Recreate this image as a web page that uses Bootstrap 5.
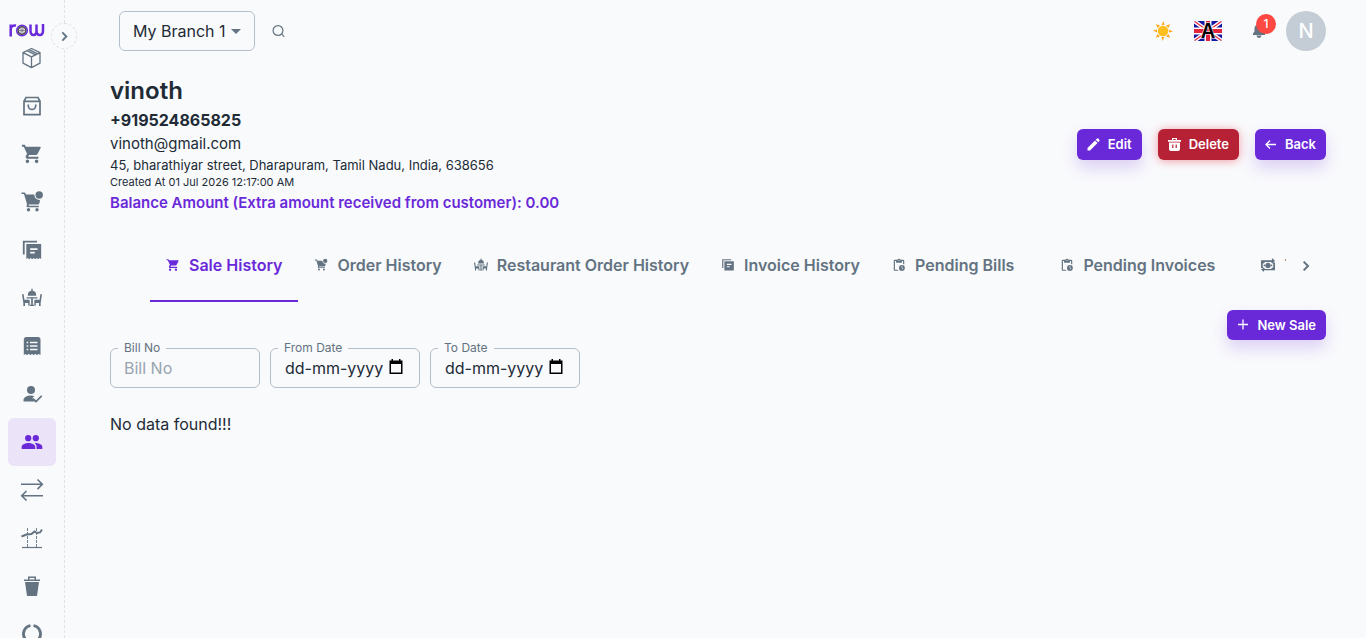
<!DOCTYPE html>
<html lang="en">
<head>
<meta charset="utf-8">
<meta name="viewport" content="width=device-width, initial-scale=1">
<title>Customer - vinoth</title>
<link rel="stylesheet" href="https://cdn.jsdelivr.net/npm/bootstrap@5.3.0/dist/css/bootstrap.min.css">
<style>
:root{--ink:#212b36;--muted:#637381;--brand:#6929d9;--page:#f9fafc;--line:#b4bfcb}
body{font-family:Inter,sans-serif;font-size:16px;line-height:24px;color:var(--ink);background:var(--page)}
a{text-decoration:none}
svg{display:block;flex:none}
svg:not([fill]){fill:currentColor}
.side{width:65px;height:100vh;border-right:1px dashed #dfe3e8}
.side-scroll{height:100%;overflow:hidden}
.logo{height:34px;padding:22px 0 0 9px}
.side-item{width:48px;height:48px;margin-left:8px;color:var(--muted);border-radius:6px}
.side-item.active{background:#ebe3f7;color:var(--brand)}
.side-toggle{top:23px;right:-13px;width:26px;height:26px;border:1px dashed #dfe3e8;background:var(--page);color:var(--muted)}
.topbar{height:62px;padding:0 40px 0 54px}
.branch{width:136px;height:40px;padding:0 24px 0 13px;border:1px solid var(--line);border-radius:6px;background:transparent;color:var(--ink);appearance:none}
.branch-caret{right:7px;top:8px;color:var(--muted);pointer-events:none}
.plain{border:0;padding:0;background:transparent;color:var(--muted)}
.lang{margin-left:21px}
.bell{margin:0 20px 0 30px}
.bell-count{left:4px;top:-10px;width:20px;height:20px;background:#ff4842;color:#fff;font-size:12px;font-weight:500;line-height:20px}
.avatar{width:40px;height:40px;background:#c4cdd5;color:#fff;font-size:20px;font-weight:500}
.page{padding:12px 40px 24px 45px}
.name{font-size:24px;line-height:34px;font-weight:600}
.phone{font-size:16px;font-weight:700}
.mail{font-size:15px}
.addr{font-size:13px;line-height:18px}
.made{font-size:11px;line-height:17px}
.balance{font-size:15px;font-weight:600;color:var(--brand)}
.act{--bs-btn-color:#fff;--bs-btn-hover-color:#fff;--bs-btn-bg:var(--brand);--bs-btn-hover-bg:#5a1fc2;--bs-btn-border-width:0px;height:31px;padding:0 10px 1px;border-radius:6px;font-size:13px;font-weight:600;line-height:24px;box-shadow:0 8px 16px rgba(105,41,217,.2)}
.act-danger{--bs-btn-bg:#b72136;--bs-btn-hover-bg:#98182b;box-shadow:0 1px 10px rgba(229,40,60,.45)}
.act-new{height:30px}
.tabs{height:72px;margin-top:15px;padding:0 40px}
.tab{gap:9px;padding:0 16px;height:72px;border:0;border-bottom:2px solid transparent;background:transparent;color:var(--muted);font-weight:600;white-space:nowrap}
.tab.active{color:var(--brand);border-color:var(--brand)}
.tab-late{margin-right:14px}
.tab-next{right:0;top:0;width:40px;height:72px}
.field{width:150px}
.field label{left:8px;top:-8px;padding:0 6px;font-size:12px;line-height:16px;color:var(--muted);background:var(--page)}
.field input{width:100%;height:40px;padding:0 13px;border:1px solid var(--line);border-radius:6px;background:transparent;color:var(--ink)}
.field input::placeholder{color:#98a4b0;opacity:1}
.field .date{padding-left:14px}
.field .date::placeholder{color:var(--ink)}
.field-pick{right:16px;top:11px;color:#000}
</style>
</head>
<body>
<svg class="d-none" aria-hidden="true">
  <symbol id="cart" viewBox="0 0 24 24"><path d="M17 18a2 2 0 1 1 0 4 2 2 0 0 1 0-4M1 2h3.300l.9 2H20.500a1 1 0 0 1 .9 1.500L18 12a2 2 0 0 1-1.700 1H8.800L7.900 14.700a.3.3 0 0 0 .3.4H19v2H7a2 2 0 0 1-1.700-3L6.600 11.600 3 4H1zM7 18a2 2 0 1 1 0 4 2 2 0 0 1 0-4"/></symbol>
  <symbol id="order" viewBox="0 0 24 24"><circle cx="19.200" cy="5" r="3.700"/><path d="M1.500 2.500h2.700a1.500 1.500 0 0 1 1.400 1L6 4.600h8.300a5.200 5.200 0 0 0 5.700 5.400l-.5 3a2 2 0 0 1-1.900 1.600H8.500l.3 1.200h10v1.500H8a1.500 1.500 0 0 1-1.400-1.900l.4-1.400L4 4.100H1.500z"/><circle cx="8.500" cy="19.700" r="1.700"/><circle cx="17" cy="19.700" r="1.700"/></symbol>
  <symbol id="invoice" viewBox="0 0 24 24"><path d="M2 2h15.500v1.800H4V17H2zM5.800 5.500H22v16.300l-1.700-1-1.700 1.200-1.600-1.200-1.600 1.200-1.600-1.200-1.600 1.200-1.600-1.200-1.600 1.200-1.600-1.200-1.600 1zM10 10v1.900h8V10zm0 4v1.900h5V14z" fill-rule="evenodd"/></symbol>
  <symbol id="dining" viewBox="0 0 24 24"><path d="M11.200 1h1.600v2.200A5 5 0 0 1 17 8v1.400H7V8a5 5 0 0 1 4.200-4.800zM5.500 11h13v1.700h-5.500V20h1.600v1.500H9.400V20H11v-7.300H5.500zM0 7.500h2l.9 6.500h5.300a1 1 0 0 1 1 1v6H7.400v-3H3.600v3.500H1.600V18zM24 7.500h-2l-.9 6.500h-5.300a1 1 0 0 0-1 1v6h1.800v-3h3.800v3.500h2V18z"/></symbol>
  <symbol id="clip" viewBox="0 0 24 24"><path d="M17 12a5 5 0 1 0 0 10 5 5 0 0 0 0-10m1.700 7.300L16.500 17v-3.200h1V16.600l1.900 1.900zM18 3h-3.200a3 3 0 0 0-5.600 0H5a2 2 0 0 0-2 2v15c0 1.100.9 2 2 2h6.100a7 7 0 0 1-1.400-2H5V5h2v3h10V5h2v5.300c.7.200 1.400.5 2 .9V5a2 2 0 0 0-2-2zm-6 2a1 1 0 1 1 0-2 1 1 0 0 1 0 2"/></symbol>
  <symbol id="chev" viewBox="0 0 24 24"><path d="M8.500 5.500 15 12l-6.500 6.500" fill="none" stroke="currentColor" stroke-width="3"/></symbol>
  <symbol id="cal" viewBox="0 0 16 16"><path d="M3.500 0v1.500H1.500V15h13V1.500h-2V0H11v1.500H5V0zM3 5h10v8.500H3z" fill-rule="evenodd"/></symbol>
</svg>

<div class="d-flex">
  <aside class="side position-sticky top-0 flex-shrink-0">
    <nav class="side-scroll" aria-label="Main">
      <a href="#" class="logo d-block" aria-label="row">
        <svg width="37" height="17" viewBox="0 0 37 17" fill="none" stroke="#6b2bdc" stroke-width="2.500"><path d="M1.700 2.500v12M1.700 8c0-3.500 2-5 5.300-4.500"/><path d="M21.500 2.500v6c0 6 6 6 6 0v-6m0 6c0 6 6.500 6 6.500 0V2"/><circle cx="13" cy="8.500" r="5.300" stroke-width="1.500"/><circle cx="13" cy="8.500" r="3.800" stroke="#4b4453" stroke-width="1.600"/><path d="M13 4.500v8M9 8.500h8M10.200 5.700l5.600 5.600M15.800 5.700l-5.600 5.600" stroke="#77717c" stroke-width=".8"/></svg>
      </a>
      <a href="#" class="side-item d-flex align-items-center justify-content-center" aria-label="Products"><svg width="24" height="24" viewBox="0 0 24 24" fill="none" stroke="currentColor" stroke-width="1.300" stroke-linejoin="round"><path d="M11.500 2.500 20 6.600v10.600l-8.500 4.400L3 17.200V6.600zM3 6.600l8.500 4.200L20 6.600M11.500 10.800v10.800M7 4.700l8.500 4.200M9 3.700l8.500 4.100"/></svg></a>
      <a href="#" class="side-item d-flex align-items-center justify-content-center" aria-label="Purchases"><svg width="24" height="24" viewBox="0 0 24 24" fill="none" stroke="currentColor" stroke-width="1.700"><path d="M4 7.300h16v13.400H4zM4 7.300 6 3.500h12l2 3.800M8.300 10.500v1.300a3.700 3.700 0 0 0 7.400 0v-1.300"/></svg></a>
      <a href="#" class="side-item d-flex align-items-center justify-content-center" aria-label="Sales"><svg width="22" height="22"><use href="#cart"/></svg></a>
      <a href="#" class="side-item d-flex align-items-center justify-content-center" aria-label="Orders"><svg width="24" height="24"><use href="#order"/></svg></a>
      <a href="#" class="side-item d-flex align-items-center justify-content-center" aria-label="Invoices"><svg width="22" height="22"><use href="#invoice"/></svg></a>
      <a href="#" class="side-item d-flex align-items-center justify-content-center" aria-label="Restaurant"><svg width="20" height="20"><use href="#dining"/></svg></a>
      <a href="#" class="side-item d-flex align-items-center justify-content-center" aria-label="Receipts"><svg width="24" height="24" viewBox="0 0 24 24"><path fill-rule="evenodd" d="M6 3h12a2.500 2.500 0 0 1 2.500 2.500V21l-1.700-.9-1.700 1-1.700-1-1.700 1-1.700-1-1.700 1-1.700-1-1.700 1-1.700-1-1.400.9V5.500A2.500 2.500 0 0 1 6 3m.7 4.700v1.500h1.500V7.700zm3.300 0v1.500h7.500V7.700zm-3.300 3.500v1.500h1.500v-1.500zm3.300 0v1.500h7.500v-1.500zm-3.300 3.500v1.500h1.500v-1.500zm3.300 0v1.500h7.500v-1.500z"/></svg></a>
      <a href="#" class="side-item d-flex align-items-center justify-content-center" aria-label="Attendance"><svg width="24" height="24" viewBox="0 0 24 24"><circle cx="11" cy="8" r="4"/><path d="M11 13.500c1.200 0 2.300.2 3.300.5l-2 2.200 3.200 3.200H3.500V18c0-2.700 3.500-4.500 7.500-4.500"/><path d="m13 16.500 3 3 5.700-5.700" fill="none" stroke="currentColor" stroke-width="1.700"/></svg></a>
      <a href="#" class="side-item active d-flex align-items-center justify-content-center" aria-label="Customers" aria-current="page"><svg width="24" height="24" viewBox="0 0 24 24"><circle cx="8.200" cy="8.200" r="3.100"/><circle cx="15.800" cy="8.200" r="3.100"/><path d="M8.500 13c-2.300 0-6.800 1.200-6.800 3.500V19h13.500v-2.500C15.200 14.200 10.800 13 8.500 13m7 0-1 .1c1.200.8 2 2 2 3.400V19h5.800v-2.500c0-2.300-4.500-3.500-6.800-3.500"/></svg></a>
      <a href="#" class="side-item d-flex align-items-center justify-content-center" aria-label="Transfers"><svg width="24" height="24" viewBox="0 0 24 24" fill="none" stroke="currentColor" stroke-width="1.600"><path d="M1 6.300h21M17.500 1.500l4.800 4.800-4.800 4.800M23 17.700H2M6.500 13l-4.800 4.700 4.800 4.800"/></svg></a>
      <a href="#" class="side-item d-flex align-items-center justify-content-center" aria-label="Reports"><svg width="24" height="24" viewBox="0 0 24 24" fill="none" stroke="currentColor"><path d="M2 21.500h20" stroke-width="1.200"/><path d="M7.500 2v19M16.500 2v19" stroke-width=".9" stroke-dasharray="3 1"/><path d="m1.500 10.500 5-2 5-.5 3-2.500 2.500 1.500 3-.5 2-3" stroke-width="1.900"/></svg></a>
      <a href="#" class="side-item d-flex align-items-center justify-content-center" aria-label="Trash"><svg width="24" height="24" viewBox="0 0 24 24"><path fill-rule="evenodd" d="M8 2.500h8v3h4V7H4V5.500h4zm1.500 1.500v1.500h5V4zM5 8h14l-2 14H7z"/></svg></a>
      <a href="#" class="side-item d-flex align-items-center justify-content-center" aria-label="Settings"><svg width="24" height="24" viewBox="0 0 24 24" fill="none" stroke="currentColor" stroke-width="2.800"><path d="M10.500 3.700A8.300 8.300 0 0 0 6.200 18M13.500 3.700A8.300 8.300 0 0 1 17.800 18"/></svg></a>
    </nav>
    <button type="button" class="side-toggle position-absolute rounded-circle d-flex align-items-center justify-content-center p-0" aria-label="Expand menu"><svg width="15" height="15"><use href="#chev"/></svg></button>
  </aside>

  <div class="flex-fill overflow-hidden">
    <header class="topbar d-flex align-items-center">
      <div class="position-relative">
        <select class="branch" aria-label="Branch"><option>My Branch 1</option></select>
        <svg class="branch-caret position-absolute" width="24" height="24" viewBox="0 0 24 24"><path d="m7 10 5 5 5-5z"/></svg>
      </div>
      <button type="button" class="plain ms-3" aria-label="Search"><svg width="16" height="16" viewBox="0 0 16 16" fill="none" stroke="currentColor" stroke-width="1.200"><circle cx="7" cy="7.500" r="4.900"/><path d="m10.700 11.200 2.600 2.600"/></svg></button>
      <div class="d-flex align-items-center ms-auto">
        <button type="button" class="plain" aria-label="Light theme">
          <svg width="20" height="20" viewBox="0 0 20 20"><path fill="#ffa91f" d="M10.500 0 11.500 4h-3zM9.500 20l-1-4h3zM0 9.500l4-1v3zM20 10.500l-4 1v-3zM2.800 3.200 7 4.600 4.600 7zM17.200 3.200 13 4.600 15.400 7zM2.800 16.800 7 15.400 4.600 13zM17.200 16.800 13 15.400l2.400-2.400z"/><circle cx="10" cy="10" r="5.300" fill="#ffc01f"/></svg>
        </button>
        <button type="button" class="plain lang" aria-label="Language">
          <svg width="28" height="20" viewBox="0 0 28 20"><clipPath id="flag"><rect width="28" height="20" rx="2"/></clipPath><g clip-path="url(#flag)"><path fill="#1717a3" d="M0 0h28v20H0z"/><path stroke="#fff" stroke-width="4" d="m0 0 28 20M28 0 0 20"/><path stroke="#e8304a" stroke-width="1.300" d="m0 0 28 20M28 0 0 20"/><path stroke="#fff" stroke-width="7" d="M14 0v20M0 10h28"/><path stroke="#e2263f" stroke-width="4" d="M14 0v20M0 10h28"/></g><text x="14" y="17" text-anchor="middle" font-family="Inter,sans-serif" font-size="20" font-weight="600" fill="#000" stroke="#fff" stroke-width="1" paint-order="stroke">A</text></svg>
        </button>
        <button type="button" class="plain bell position-relative" aria-label="Notifications">
          <svg width="14" height="14" viewBox="0 0 14 14"><path d="M7 0a4.500 4.500 0 0 0-4.500 4.500v3L1 9.500V11h12V9.500l-1.500-2v-3A4.500 4.500 0 0 0 7 0M4.500 11.500a2.500 2.500 0 0 0 5 0z"/></svg>
          <span class="bell-count position-absolute rounded-circle">1</span>
        </button>
        <button type="button" class="plain avatar rounded-circle" aria-label="Account">N</button>
      </div>
    </header>

    <main class="page">
      <div class="d-flex align-items-center justify-content-between">
        <div>
          <h1 class="name mb-0">vinoth</h1>
          <div class="phone">+919524865825</div>
          <div class="mail">vinoth@gmail.com</div>
          <div class="addr">45, bharathiyar street, Dharapuram, Tamil Nadu, India, 638656</div>
          <div class="made">Created At 01 Jul 2026 12:17:00 AM</div>
          <div class="balance">Balance Amount (Extra amount received from customer): 0.00</div>
        </div>
        <div class="d-flex gap-3">
          <button type="button" class="btn act d-flex align-items-center gap-2"><svg width="13" height="13" viewBox="0 0 13 13"><path d="M.5 10 8 2.500 10.500 5 3 12.500H.5zM8.700 1.800 10 .6q.6-.5 1.200 0l1.200 1.200q.5.600 0 1.200l-1.200 1.300z"/></svg>Edit</button>
          <button type="button" class="btn act act-danger d-flex align-items-center gap-2"><svg width="13" height="13" viewBox="0 0 13 13"><path fill-rule="evenodd" d="M4 0h5v2h4v1.800H0V2h4zm1.300 1v1h2.400V1zM1 4.500h11V11q0 2-2 2H3q-2 0-2-2zM4.200 6.500V10h1.200V6.500zm3.400 0V10h1.200V6.500z"/></svg>Delete</button>
          <button type="button" class="btn act d-flex align-items-center gap-2"><svg width="12" height="13" viewBox="0 0 12 13" fill="none" stroke="currentColor" stroke-width="1.300"><path d="M11 6.500H1M5 2.500l-4 4 4 4"/></svg>Back</button>
        </div>
      </div>

      <div class="tabs position-relative">
        <div class="d-flex overflow-hidden" role="tablist">
          <button type="button" role="tab" aria-selected="true" class="tab active d-flex align-items-center"><svg width="14" height="14"><use href="#cart"/></svg>Sale History</button>
          <button type="button" role="tab" class="tab d-flex align-items-center"><svg width="14" height="14"><use href="#order"/></svg>Order History</button>
          <button type="button" role="tab" class="tab d-flex align-items-center"><svg width="14" height="14"><use href="#dining"/></svg>Restaurant Order History</button>
          <button type="button" role="tab" class="tab d-flex align-items-center"><svg width="14" height="14"><use href="#invoice"/></svg>Invoice History</button>
          <button type="button" role="tab" class="tab tab-late d-flex align-items-center"><svg width="14" height="14"><use href="#clip"/></svg>Pending Bills</button>
          <button type="button" role="tab" class="tab tab-late d-flex align-items-center"><svg width="14" height="14"><use href="#clip"/></svg>Pending Invoices</button>
          <button type="button" role="tab" class="tab d-flex align-items-center"><svg width="14" height="14" viewBox="0 0 16 16"><path fill-rule="evenodd" d="M0 2.500h12.500V0L16 3.200l-2 1.800h2v9H3.500v2L0 13l2.500-1.500H0zM4.500 4.500Q4 6 2 6.500v4q2 .5 2.500 2h7q.5-1.500 2.500-2v-4q-2-.5-2.500-2zM8 5.500a3 3 0 1 1 0 6 3 3 0 0 1 0-6"/><circle cx="4" cy="8.500" r="1"/><circle cx="12" cy="8.500" r="1"/></svg>Transactions</button>
        </div>
        <button type="button" class="tab-next plain position-absolute d-flex align-items-center justify-content-center" aria-label="More tabs"><svg width="16" height="16"><use href="#chev"/></svg></button>
      </div>

      <div class="d-flex justify-content-end mt-2">
        <button type="button" class="btn act act-new d-flex align-items-center gap-2"><svg width="12" height="13" viewBox="0 0 12 13" fill="none" stroke="currentColor" stroke-width="1.300"><path d="M6 1.500v10M1 6.500h10"/></svg>New Sale</button>
      </div>

      <form class="d-flex flex-wrap mt-2 mb-4" style="gap:10px">
        <div class="field position-relative"><label class="position-absolute" for="bill">Bill No</label><input id="bill" type="text" placeholder="Bill No"></div>
        <div class="field position-relative"><label class="position-absolute" for="from">From Date</label><input id="from" class="date" type="text" placeholder="dd-mm-yyyy"><button type="button" class="plain field-pick position-absolute" aria-label="Pick from date"><svg width="16" height="16"><use href="#cal"/></svg></button></div>
        <div class="field position-relative"><label class="position-absolute" for="to">To Date</label><input id="to" class="date" type="text" placeholder="dd-mm-yyyy"><button type="button" class="plain field-pick position-absolute" aria-label="Pick to date"><svg width="16" height="16"><use href="#cal"/></svg></button></div>
      </form>
      <p class="mb-0">No data found!!!</p>
    </main>
  </div>
</div>
<script src="https://cdn.jsdelivr.net/npm/bootstrap@5.3.0/dist/js/bootstrap.bundle.min.js"></script>
</body>
</html>
